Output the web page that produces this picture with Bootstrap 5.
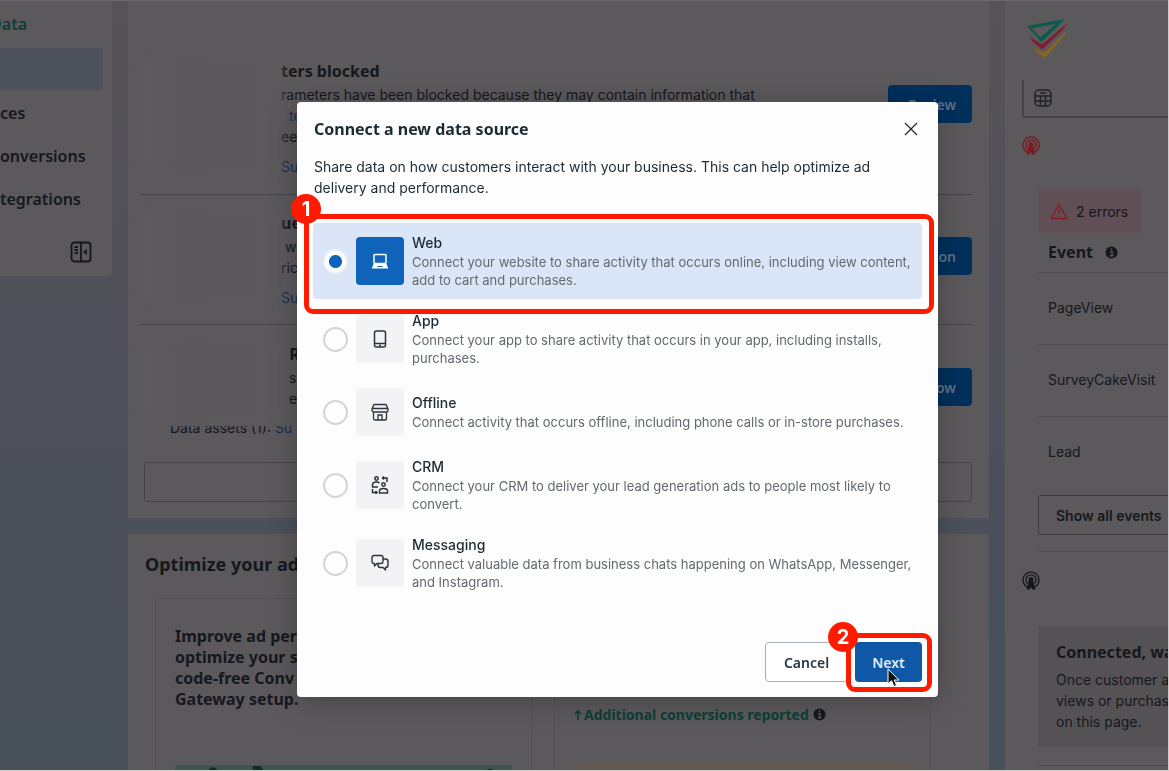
<!DOCTYPE html>
<html lang="en">
<head>
<meta charset="utf-8">
<meta name="viewport" content="width=device-width, initial-scale=1">
<title>Connect a new data source</title>
<link href="https://cdn.jsdelivr.net/npm/bootstrap@5.3.0/dist/css/bootstrap.min.css" rel="stylesheet">
<style>
  :root { --panel:#5b595c; --ink:#15181d; --line:#434347; --link:#142f50; --green:#0d3f37; --red:#ff1a00; }
  body { font-family:Inter,"Liberation Sans",sans-serif; font-size:14px; line-height:21px; color:var(--ink); background:#cfcdcb; }
  .heading { font-family:"Noto Sans","Liberation Sans",sans-serif; font-weight:700; font-size:16px; line-height:22px; margin:0; }
  .app-shell { height:100vh; padding:0 1px 1px 0; }
  .app-body { gap:16px; background:linear-gradient(#565356,#4f505a 45%,#48505a); border-top:1px solid #6b696c; }
  .panel { background:var(--panel); }
  a { color:var(--link); text-decoration:none; }

  /* left navigation */
  .side { flex:0 0 112px; }
  .side-nav { height:275px; padding-top:12px; border-radius:0 0 4px 0; }
  .side-nav a { display:block; color:var(--ink); font-family:"Noto Sans",sans-serif; font-weight:600; font-size:16px; line-height:22px; white-space:nowrap; }
  .side-nav a.product { color:var(--green); width:27px; display:flex; justify-content:flex-end; }
  .side-nav .current { height:42px; width:103px; background:#4c515b; margin:13px 0 12px; }
  .side-nav a.sub { margin-bottom:21px; }
  .toggle { margin:0 20px 0 0; padding-top:10px; }
  .plain-btn { border:0; background:none; padding:0; line-height:0; color:inherit; }

  /* recommendations */
  .issues { padding:0 17px 16px 12px; height:517px; }
  .issue { border-bottom:1px solid var(--line); padding:17px 0 16px; height:130px; }
  .issue:first-child { padding-top:59px; height:194px; }
  .issue.last-issue { border:0; height:101px; padding:18px 0 0; }
  .issue p { margin:2px 0 0; }
  .issue a { display:block; margin-top:9px; }
  .smudge { flex:0 0 141px; background:linear-gradient(90deg,#605c5f,#59575a 30%,#5b595c); filter:blur(6px); margin-bottom:8px; }
  .dim-btn { width:84px; height:38px; margin-top:25px; border:0; border-radius:4px; background:#00305c; color:#5f7085; font-family:"Noto Sans",sans-serif; font-weight:600; font-size:14px; text-align:right; padding:0 16px; white-space:nowrap; }
  .assets { height:12px; margin-left:30px; overflow:hidden; display:flex; align-items:flex-end; white-space:pre; }
  .see-all { width:100%; height:40px; border:1px solid var(--line); border-radius:3px; background:none; }
  .optimize { padding:18px 28px 0 17px; overflow:hidden; }
  .optimize > h2 { font-size:18px; line-height:24px; }
  .promo-row { gap:22px; margin:22px 30px 0 10px; }
  .promo { border:1px solid #535154; padding:27px 19px 0; }
  .promo .heading { line-height:21px; }
  .art { height:6px; }

  /* data source details */
  .detail { flex:0 0 163px; overflow:hidden; padding-left:17px; white-space:nowrap; }
  .picker { height:38px; border:1px solid var(--line); border-width:0 0 2px 2px; padding-left:10px; border-radius:0 0 0 3px; }
  .errors { width:103px; height:44px; margin:34px 0 0 17px; background:#604f54; gap:8px; padding-left:11px; }
  .events { margin:0 0 0 16px; width:148px; }
  .events th,.events td { padding:0 0 2px 10px; border-bottom:1px solid #4a494c; }
  .events th { height:39px; padding-bottom:0; }
  .events td { height:72px; font-size:14px; }
  .events tr:last-child td { border:0; }
  .show-all { height:40px; margin:7px 0 0 16px; width:160px; border:1px solid #3c3c42; background:none; color:var(--ink); text-align:left; padding:0 0 0 17px; border-radius:3px 0 0 3px; font-size:14px; font-weight:600; }
  .rule { height:1px; background:#4a494c; margin:16px 0 0 17px; }
  .waiting { background:#545255; margin:36px 0 18px 16px; padding:15px 0 15px 18px; }
  .waiting p { margin:6px 0 0; }

  /* dialog */
  .source-modal { padding-left:66px; }
  .source-modal .modal-dialog { max-width:641px; margin:102px auto 0; }
  .source-modal .modal-content { border:0; border-radius:4px; background:#fefdfe; color:#1c2b33; box-shadow:0 4px 30px rgba(0,0,0,.25); padding:16px 16px 15px; }
  .source-modal .heading { margin-left:1px; }
  .intro { margin:16px 0 25px 1px; }
  .options { gap:2px; }
  .option { width:609px; max-width:100%; padding:9px 10px; gap:8px; border-radius:4px; position:relative; }
  .option.chosen { background:#dae6f7; }
  .option input { appearance:none; flex:0 0 25px; width:25px; height:25px; margin:0; border:2px solid #d3d4d8; border-radius:50%; background:#fefdfe; }
  .option input:checked { border-color:#eef0f2; background:radial-gradient(circle,#0f63b8 6px,#fff 7px); }
  .tile { flex:0 0 48px; height:48px; border-radius:3px; background:#f3f2f4; color:#2a343c; }
  .chosen .tile { background:#0f64ba; color:#fff; border-radius:4px; }
  .option-name { line-height:20px; font-weight:500; font-size:14px; }
  .option-note { line-height:18px; font-size:13px; color:#63696f; }
  .option-text { padding:1px 0; }
  .actions { margin-top:41px; gap:7px; }
  .actions .btn { font-size:14px; font-weight:600; height:40px; border-radius:4px; font-family:"Noto Sans",sans-serif; }
  .cancel { width:83px; border:1px solid #a9b0b8; color:#2b3740; background:#fff; }
  .next { width:67px; padding:0; background:#0f58a8; color:#dfeaf6; border:0; }
  .frame { position:absolute; border:5px solid var(--red); border-radius:9px; pointer-events:none; }
  .frame-list { inset:-9px -12px -15px -9px; }
  .frame-next { inset:-9px -10px -10px -9px; }
  .step { position:absolute; left:-18px; top:-25px; width:30px; height:30px; border-radius:50%; background:var(--red); color:#fff; font:700 20px/30px Inter,sans-serif; text-align:center; }
  .frame-next .step { left:-23px; top:-16px; }
  .pointer { position:absolute; left:32px; top:26px; }
</style>
</head>
<body class="overflow-hidden">
<div class="app-shell">
 <div class="app-body d-flex h-100 overflow-hidden">
  <aside class="side">
   <nav class="side-nav panel" aria-label="Data">
    <a href="#" class="product">Data</a>
    <div class="current"></div>
    <a href="#" class="sub">ces</a>
    <a href="#" class="sub">onversions</a>
    <a href="#" class="sub">tegrations</a>
    <div class="toggle d-flex justify-content-end">
     <button class="plain-btn" aria-label="Collapse menu"><svg width="22" height="22" viewBox="0 0 22 22" fill="none" stroke="currentColor" stroke-width="1.8"><rect x="1.5" y="1.5" width="19" height="19" rx="3"/><path d="M11 2v18M4.500 6h3.500M4.500 9h3.500M4.500 12h3.500" /><path d="M17 8v6l-4-3z" fill="currentColor" stroke="none"/></svg></button>
    </div>
   </nav>
  </aside>

  <main class="d-flex flex-column flex-grow-1 gap-3" style="min-width:0">
   <section class="issues panel">
    <article class="issue d-flex">
     <div class="smudge"></div>
     <div class="flex-grow-1"><h3 class="heading">ters blocked</h3>
      <p>rameters have been blocked because they may contain information that<br><a class="d-inline" href="#">&nbsp; te</a><br>eep</p><a href="#">Su</a></div>
     <button class="dim-btn">Review</button>
    </article>
    <article class="issue d-flex">
     <div class="smudge"></div>
     <div class="flex-grow-1"><h3 class="heading">ue</h3><p>&nbsp;w<br>ric</p><a href="#">Su</a></div>
     <button class="dim-btn">Action</button>
    </article>
    <article class="issue last-issue d-flex">
     <div class="smudge"></div>
     <div class="flex-grow-1"><h3 class="heading">&nbsp; R</h3><p>&nbsp; s<br>&nbsp; e</p></div>
     <button class="dim-btn">Show</button>
    </article>
    <div class="assets">Data assets (1): <a href="#">Su</a></div>
    <div class="pt-4 ps-1"><button class="see-all" aria-label="See all"></button></div>
   </section>
   <section class="optimize panel flex-grow-1">
    <h2 class="heading">Optimize your ad</h2>
    <div class="promo-row d-flex h-100">
     <div class="promo w-50"><h3 class="heading">Improve ad perf<br>optimize your sp<br>code-free Conv<br>Gateway setup.</h3>
      <svg class="art d-block w-100" style="margin-top:55px" viewBox="0 0 338 6" preserveAspectRatio="none"><rect width="338" height="6" fill="#3f5550"/><path d="M33 6q5-8 10 0zM78 6V1h8l3 5zM312 6q4-5 8 0z" fill="#0c3029"/></svg></div>
     <div class="promo w-50 d-flex flex-column"><div class="d-flex align-items-center heading" style="margin-top:78px;color:var(--green);font-size:14px">
       <svg width="10" height="12" viewBox="0 0 10 12" fill="none" stroke="currentColor" stroke-width="1.6"><path d="M4 11V2M1 5l3-3 3 3"/></svg><span>Additional conversions reported</span>
       <svg class="ms-1" width="13" height="13" viewBox="0 0 14 14"><circle cx="7" cy="7" r="6.500" fill="#15181d"/><path d="M5.500 6H7.600v4.500M5.200 10.500h4M7 2.800v1.700" stroke="#5b595c" stroke-width="1.500" fill="none"/></svg></div>
      <div class="art" style="margin-top:39px;background:#65574e"></div></div>
    </div>
   </section>
  </main>

  <aside class="detail panel">
   <svg class="d-block" style="margin:18px 0 21px 5px" width="41" height="40" viewBox="0 0 41 40"><path fill-rule="evenodd" d="M0 7 38 0 14.500 23ZM5 9.500 13.500 18.500 29 4.800Z" fill="#0c5a4b"/><path d="M3 18l12 7.500L40 4.500 36 11 15 30.500 5 22z" fill="#801c32"/><path d="M6.500 28.500 17 34 40 11.500 36.500 18 17.500 39 9 32z" fill="#8a651f"/></svg>
   <div class="picker d-flex align-items-center">
    <svg width="18" height="18" viewBox="0 0 18 18" fill="none" stroke="#202227" stroke-width="1.500"><rect x="1" y="1" width="16" height="16" rx="4"/><path d="M1 7h16M1 12h16M6.500 7v10M11.500 7v10M6 4h6"/></svg>
   </div>
   <svg class="d-block" style="margin-top:18px" width="18" height="19" viewBox="0 0 18 19" fill="none" stroke="#7b1c20" stroke-width="1.500"><path d="M5 16a8 8 0 1 1 8 0M5.500 12.500a5 5 0 1 1 7 0"/><circle cx="9" cy="8.500" r="2.500" fill="#7b1c20" stroke="none"/><path d="M7 9h4l2.500 9.500h-3L9 16l-1.500 2.500h-3z" fill="#7b1c20" stroke="none"/></svg>
   <div class="errors d-flex align-items-center">
    <svg width="18" height="17" viewBox="0 0 18 17" fill="none" stroke="#851e27" stroke-width="1.500"><path d="M9 1.500 16.800 15.500H1.200ZM9 6v5M9 12.500v1.500" stroke-linejoin="round"/></svg><span>2 errors</span>
   </div>
   <table class="events">
    <thead><tr><th scope="col"><div class="d-flex align-items-center"><span class="heading">Event</span><svg style="margin-left:12px" width="13" height="13" viewBox="0 0 14 14"><circle cx="7" cy="7" r="6.500" fill="#15181d"/><path d="M5.500 6H7.600v4.500M5.200 10.500h4M7 2.800v1.700" stroke="#5b595c" stroke-width="1.500" fill="none"/></svg></div></th></tr></thead>
    <tbody><tr><td>PageView</td></tr><tr><td>SurveyCakeVisit</td></tr><tr><td>Lead</td></tr></tbody>
   </table>
   <button class="show-all">Show all events</button>
   <div class="rule"></div>
   <svg class="d-block" style="margin-top:19px" width="18" height="19" viewBox="0 0 18 19" fill="none" stroke="#15181d" stroke-width="1.300"><path d="M5 16a8 8 0 1 1 8 0M5.500 12.500a5 5 0 1 1 7 0"/><circle cx="9" cy="8.500" r="2.500" fill="#15181d" stroke="none"/><path d="M7 9h4l2.500 9.500h-3L9 16l-1.500 2.500h-3z" fill="#15181d" stroke="none"/></svg>
   <div class="waiting"><h3 class="heading">Connected, wa</h3><p>Once customer a<br>views or purchas<br>on this page.</p></div>
   <div class="rule mt-0"></div>
  </aside>
 </div>
</div>

<div class="modal source-modal d-block" role="dialog" aria-labelledby="dialogTitle">
 <div class="modal-dialog">
  <form class="modal-content">
   <div class="d-flex justify-content-between align-items-center">
    <h1 class="heading" id="dialogTitle">Connect a new data source</h1>
    <button type="button" class="plain-btn pe-1 me-px" aria-label="Close"><svg width="18" height="14" viewBox="0 0 18 14" stroke="#1c2b33" stroke-width="1.300"><path d="M5 1l12 12M17 1 5 13"/></svg></button>
   </div>
   <p class="intro">Share data on how customers interact with your business. This can help optimize ad<br>delivery and performance.</p>
   <div class="options d-flex flex-column">
    <label class="option chosen d-flex align-items-center"><input type="radio" name="source" checked>
     <span class="tile d-flex align-items-center justify-content-center"><svg width="18" height="16" viewBox="0 0 18 16" fill="none" stroke="currentColor" stroke-width="1.500"><rect x="3" y="1.500" width="12" height="9" rx="1"/><path d="M2.500 11h13l1.700 4.500H.8z" fill="currentColor" stroke="none"/><path d="M6.500 13.500h5" stroke="#0f64ba" stroke-width="1"/></svg></span>
     <span class="option-text"><span class="option-name d-block">Web</span><span class="option-note d-block">Connect your website to share activity that occurs online, including view content,<br>add to cart and purchases.</span></span>
     <span class="frame frame-list"><span class="step">1</span></span></label>
    <label class="option d-flex align-items-center"><input type="radio" name="source">
     <span class="tile d-flex align-items-center justify-content-center"><svg width="14" height="18" viewBox="0 0 14 18" fill="none" stroke="currentColor" stroke-width="1.500"><rect x="1.500" y="1" width="11" height="16" rx="2"/><path d="M1.500 13.500h11M6 15.500h2"/></svg></span>
     <span class="option-text"><span class="option-name d-block">App</span><span class="option-note d-block">Connect your app to share activity that occurs in your app, including installs,<br>purchases.</span></span></label>
    <label class="option d-flex align-items-center"><input type="radio" name="source">
     <span class="tile d-flex align-items-center justify-content-center"><svg width="18" height="18" viewBox="0 0 18 18" fill="none" stroke="currentColor" stroke-width="1.300"><path d="M3 1.500h12l2 4.500v1.500a2 2 0 0 1-2 1.500H3a2 2 0 0 1-2-1.500V6zM1 5.500h16M2.500 9v6.500a1.500 1.500 0 0 0 1.500 1.500h10a1.500 1.500 0 0 0 1.500-1.500V9M7 17v-5h4v5"/></svg></span>
     <span class="option-text"><span class="option-name d-block">Offline</span><span class="option-note d-block">Connect activity that occurs offline, including phone calls or in-store purchases.</span></span></label>
    <label class="option d-flex align-items-center"><input type="radio" name="source">
     <span class="tile d-flex align-items-center justify-content-center"><svg width="18" height="18" viewBox="0 0 18 18" fill="none" stroke="currentColor" stroke-width="1.500"><circle cx="5.500" cy="2.500" r="1.700"/><path d="M7 11H1.500V9q0-3 4-3 2 0 3 1"/><circle cx="12.500" cy="8.500" r="1.700"/><path d="M8.500 17v-2q0-2.500 4-2.500t4 2.500v2zM11.500 2H16v4M13 .5 11.500 2 13 3.500M1.500 13v3.500H6M4.500 15 6 16.500 4.500 18"/></svg></span>
     <span class="option-text"><span class="option-name d-block">CRM</span><span class="option-note d-block">Connect your CRM to deliver your lead generation ads to people most likely to<br>convert.</span></span></label>
    <label class="option d-flex align-items-center"><input type="radio" name="source">
     <span class="tile d-flex align-items-center justify-content-center"><svg width="18" height="18" viewBox="0 0 18 18" fill="none" stroke="currentColor" stroke-width="1.400" stroke-linejoin="round"><path d="M3 1.500h7a2 2 0 0 1 2 2v4a2 2 0 0 1-2 2H6L3.500 12V9.500H3a2 2 0 0 1-2-2v-4a2 2 0 0 1 2-2z"/><path d="M12 5h2.500A2.500 2.500 0 0 1 17 7.500V11a2.500 2.500 0 0 1-2.500 2.500V16L12 13.500H9.500A2.500 2.500 0 0 1 7 11V9.500"/></svg></span>
     <span class="option-text"><span class="option-name d-block">Messaging</span><span class="option-note d-block">Connect valuable data from business chats happening on WhatsApp, Messenger,<br>and Instagram.</span></span></label>
   </div>
   <div class="actions d-flex justify-content-end">
    <button type="button" class="btn cancel">Cancel</button>
    <div class="position-relative"><button type="button" class="btn next">Next</button>
     <span class="frame frame-next"><span class="step">2</span></span>
     <svg class="pointer" width="14" height="20" viewBox="0 0 14 20"><path d="M1 1v15l3.500-3.300L7 18.500l2.600-1.200L7.200 12H12z" fill="#111" stroke="#fff" stroke-width="1"/></svg></div>
   </div>
  </form>
 </div>
</div>
<script src="https://cdn.jsdelivr.net/npm/bootstrap@5.3.0/dist/js/bootstrap.bundle.min.js"></script>
</body>
</html>
